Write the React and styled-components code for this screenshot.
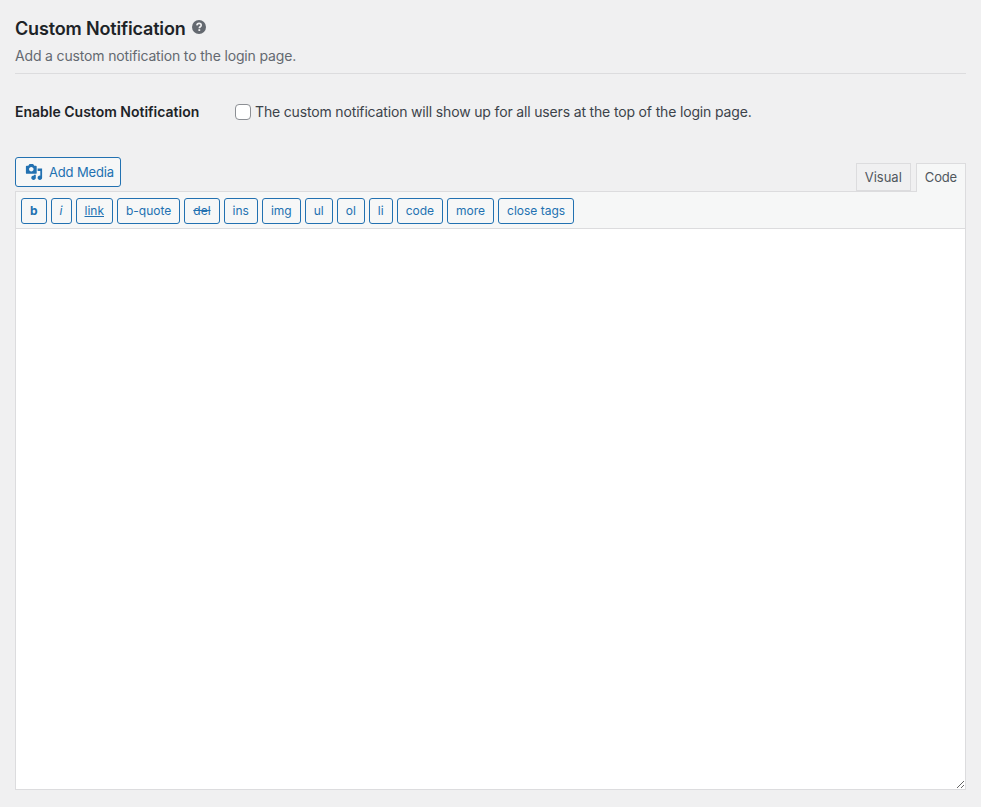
import React from 'react';
import styled, {createGlobalStyle} from 'styled-components';

const QUICKTAGS = ['b', 'i', 'link', 'b-quote', 'del', 'ins', 'img', 'ul', 'ol', 'li', 'code', 'more', 'close tags'];

const GlobalStyle = createGlobalStyle`
  html, body {
    margin: 0;
    padding: 0;
    background: #f0f0f1;
  }

  body {
    color: #1d2327;
    font-family: Inter, "Liberation Sans", sans-serif;
    font-size: 14px;
    line-height: 20px;
  }
`;

const Page = styled.div`
  box-sizing: border-box;
  width: 981px;
  height: 807px;
  padding: 19px 15px 0;
  overflow: hidden;
`;

const Header = styled.header`
  border-bottom: 1px solid #dcdcde;
  padding-bottom: 7px;
`;

const TitleRow = styled.div`
  display: flex;
  align-items: center;
  gap: 6px;
  height: 20px;
`;

const Title = styled.h2`
  margin: 0;
  font-size: 18px;
  font-weight: 600;
  line-height: 20px;
  letter-spacing: -0.16px;
  color: #1d2327;
`;

const HelpIcon = styled.svg`
  display: block;
  width: 14px;
  height: 14px;
  margin-top: -4px;
`;

const Description = styled.p`
  margin: 7px 0 0;
  font-size: 14px;
  line-height: 20px;
  letter-spacing: -0.16px;
  color: #646970;
`;

const SettingRow = styled.div`
  display: flex;
  align-items: center;
  margin-top: 28px;
  height: 20px;
`;

const SettingLabel = styled.label`
  width: 220px;
  flex-shrink: 0;
  font-weight: 600;
  color: #1d2327;
`;

const CheckboxLabel = styled.label`
  display: flex;
  align-items: center;
  letter-spacing: -0.16px;
  color: #3c434a;
`;

const Checkbox = styled.input`
  appearance: none;
  box-sizing: border-box;
  width: 16px;
  height: 16px;
  margin: 0 4px 0 0;
  background: #fff;
  border: 1px solid #8c8f94;
  border-radius: 4px;
`;

const Editor = styled.div`
  margin-top: 35px;
`;

const EditorTools = styled.div`
  display: flex;
  justify-content: space-between;
  align-items: flex-end;
  height: 34px;
`;

const MediaButton = styled.button`
  display: flex;
  align-items: center;
  gap: 6px;
  box-sizing: border-box;
  align-self: flex-start;
  height: 30px;
  padding: 0 6px 0 9px;
  background: #f6f7f7;
  border: 1px solid #2271b1;
  border-radius: 3px;
  color: #2271b1;
  font-family: inherit;
  font-size: 13px;
  letter-spacing: -0.16px;
`;

const MediaIcon = styled.svg`
  display: block;
  width: 18px;
  height: 18px;
  fill: #2271b1;
`;

const Tabs = styled.div`
  display: flex;
  gap: 5px;
`;

const Tab = styled.button`
  position: relative;
  box-sizing: border-box;
  height: ${(props) => (props.$active ? '29px' : '28px')};
  margin-bottom: ${(props) => (props.$active ? '-1px' : '0')};
  padding: ${(props) => (props.$active ? '0 8px 1px' : '0 8px')};
  background: ${(props) => (props.$active ? '#f6f7f7' : '#f0f0f1')};
  border: 1px solid #dcdcde;
  border-bottom: ${(props) => (props.$active ? '0' : '1px solid #dcdcde')};
  color: #50575e;
  font-family: inherit;
  font-size: 13px;
  line-height: 19px;
  letter-spacing: ${(props) => (props.$active ? '-0.16px' : '0')};
`;

const Toolbar = styled.div`
  display: flex;
  gap: 4px;
  box-sizing: border-box;
  height: 38px;
  padding: 6px 5px 0;
  background: #f6f7f7;
  border: 1px solid #dcdcde;
`;

const TagButton = styled.button`
  box-sizing: border-box;
  height: 26px;
  padding: 0 8px;
  background: #f6f7f7;
  border: 1px solid #2271b1;
  border-radius: 3px;
  color: #2271b1;
  font-family: inherit;
  font-size: 12px;
  line-height: 24px;
  font-weight: ${(props) => (props.$tag === 'b' ? 700 : 400)};
  font-style: ${(props) => (props.$tag === 'i' ? 'italic' : 'normal')};
  text-decoration: ${(props) => {
    if (props.$tag === 'link') {
      return 'underline';
    }
    return props.$tag === 'del' ? 'line-through' : 'none';
  }};
`;

const EditorArea = styled.textarea`
  display: block;
  box-sizing: border-box;
  width: 100%;
  height: 561px;
  margin: 0;
  padding: 10px;
  background: #fff;
  border: 1px solid #dcdcde;
  border-top: 0;
  border-radius: 0;
  outline: none;
  resize: vertical;
`;

const App = () => (
  <>
    <GlobalStyle />
    <Page>
      <Header>
        <TitleRow>
          <Title>Custom Notification</Title>
          <HelpIcon viewBox="0 0 14 14" aria-hidden="true">
            <circle cx="7" cy="7" r="7" fill="#646970" />
            <path d="M4.9 5.4C5 4.1 5.9 3.4 7.1 3.4c1.2 0 2.1.7 2.1 1.8 0 1.6-1.9 1.5-1.9 3" fill="none" stroke="#f0f0f1" strokeWidth="1.6" />
            <rect x="6.4" y="9.2" width="1.8" height="1.8" fill="#f0f0f1" />
          </HelpIcon>
        </TitleRow>
        <Description>Add a custom notification to the login page.</Description>
      </Header>
      <SettingRow>
        <SettingLabel htmlFor="enable-notification">Enable Custom Notification</SettingLabel>
        <CheckboxLabel>
          <Checkbox id="enable-notification" type="checkbox" />
          The custom notification will show up for all users at the top of the login page.
        </CheckboxLabel>
      </SettingRow>
      <Editor>
        <EditorTools>
          <MediaButton type="button">
            <MediaIcon viewBox="0 0 20 20" aria-hidden="true">
              <path d="M13 11V4c0-.55-.45-1-1-1h-1.67L9 1H5L3.67 3H2c-.55 0-1 .45-1 1v7c0 .55.45 1 1 1h10c.55 0 1-.45 1-1zM7 4.5c1.38 0 2.5 1.12 2.5 2.5S8.38 9.5 7 9.5 4.5 8.38 4.5 7 5.62 4.5 7 4.5zM14 6h5v10.5c0 1.38-1.12 2.5-2.5 2.5S14 17.88 14 16.5s1.12-2.5 2.5-2.5c.17 0 .34.02.5.05V9h-3V6zm-4 8.05V13h2v3.5c0 1.38-1.12 2.5-2.5 2.5S7 17.88 7 16.5 8.12 14 9.5 14c.17 0 .34.02.5.05z" />
            </MediaIcon>
            Add Media
          </MediaButton>
          <Tabs>
            <Tab type="button">Visual</Tab>
            <Tab type="button" $active>Code</Tab>
          </Tabs>
        </EditorTools>
        <Toolbar>
          {QUICKTAGS.map((tag) => (
            <TagButton key={tag} type="button" $tag={tag}>{tag}</TagButton>
          ))}
        </Toolbar>
        <EditorArea aria-label="Custom notification" />
      </Editor>
    </Page>
  </>
);

export default App;
